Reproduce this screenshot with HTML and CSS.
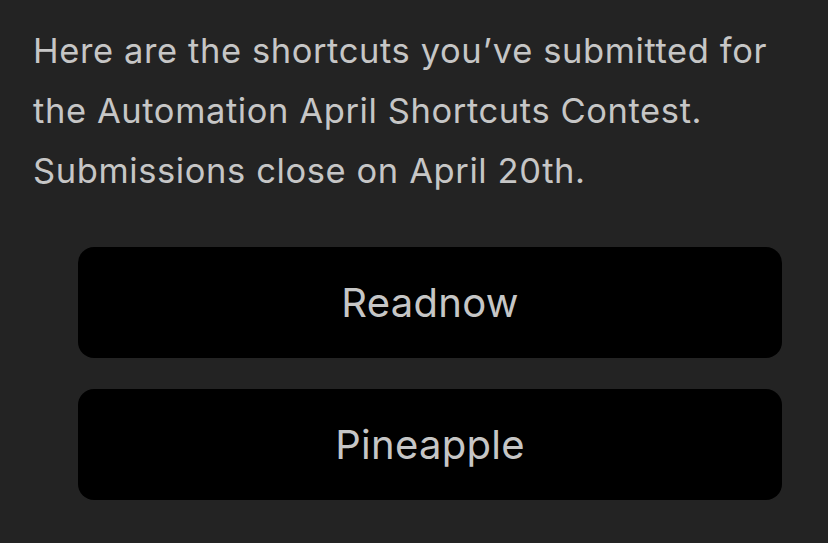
FILE: index.html
```html
<!DOCTYPE html>
<html>
<head>
<meta charset="utf-8">
<link rel="stylesheet" href="styles.css">
</head>
<body>
<div class="page">
  <p class="intro">Here are the shortcuts you’ve submitted for the Automation April Shortcuts Contest. Submissions close on April 20th.</p>
  <div class="list">
    <button class="item">Readnow</button>
    <button class="item">Pineapple</button>
  </div>
</div>
</body>
</html>
```
FILE: styles.css
```css
html, body {
  margin: 0;
  padding: 0;
  background: #232323;
  height: 100%;
  overflow: hidden;
}
.page {
  padding: 21px 30px 0 33px;
  font-family: Inter, "Noto Sans", sans-serif;
  color: #c6c6c6;
}
.intro {
  margin: 0;
  font-size: 34.5px;
  line-height: 60px;
  letter-spacing: 0.6px;
}
.list {
  display: flex;
  flex-direction: column;
  gap: 31px;
  margin: 46px 16px 0 45px;
}
.item {
  display: flex;
  align-items: center;
  justify-content: center;
  height: 111px;
  background: #000;
  border: none;
  border-radius: 16px;
  color: #c6c6c6;
  font-family: Inter, "Noto Sans", sans-serif;
  font-size: 40px;
  letter-spacing: 0.3px;
  padding: 0;
}
```
